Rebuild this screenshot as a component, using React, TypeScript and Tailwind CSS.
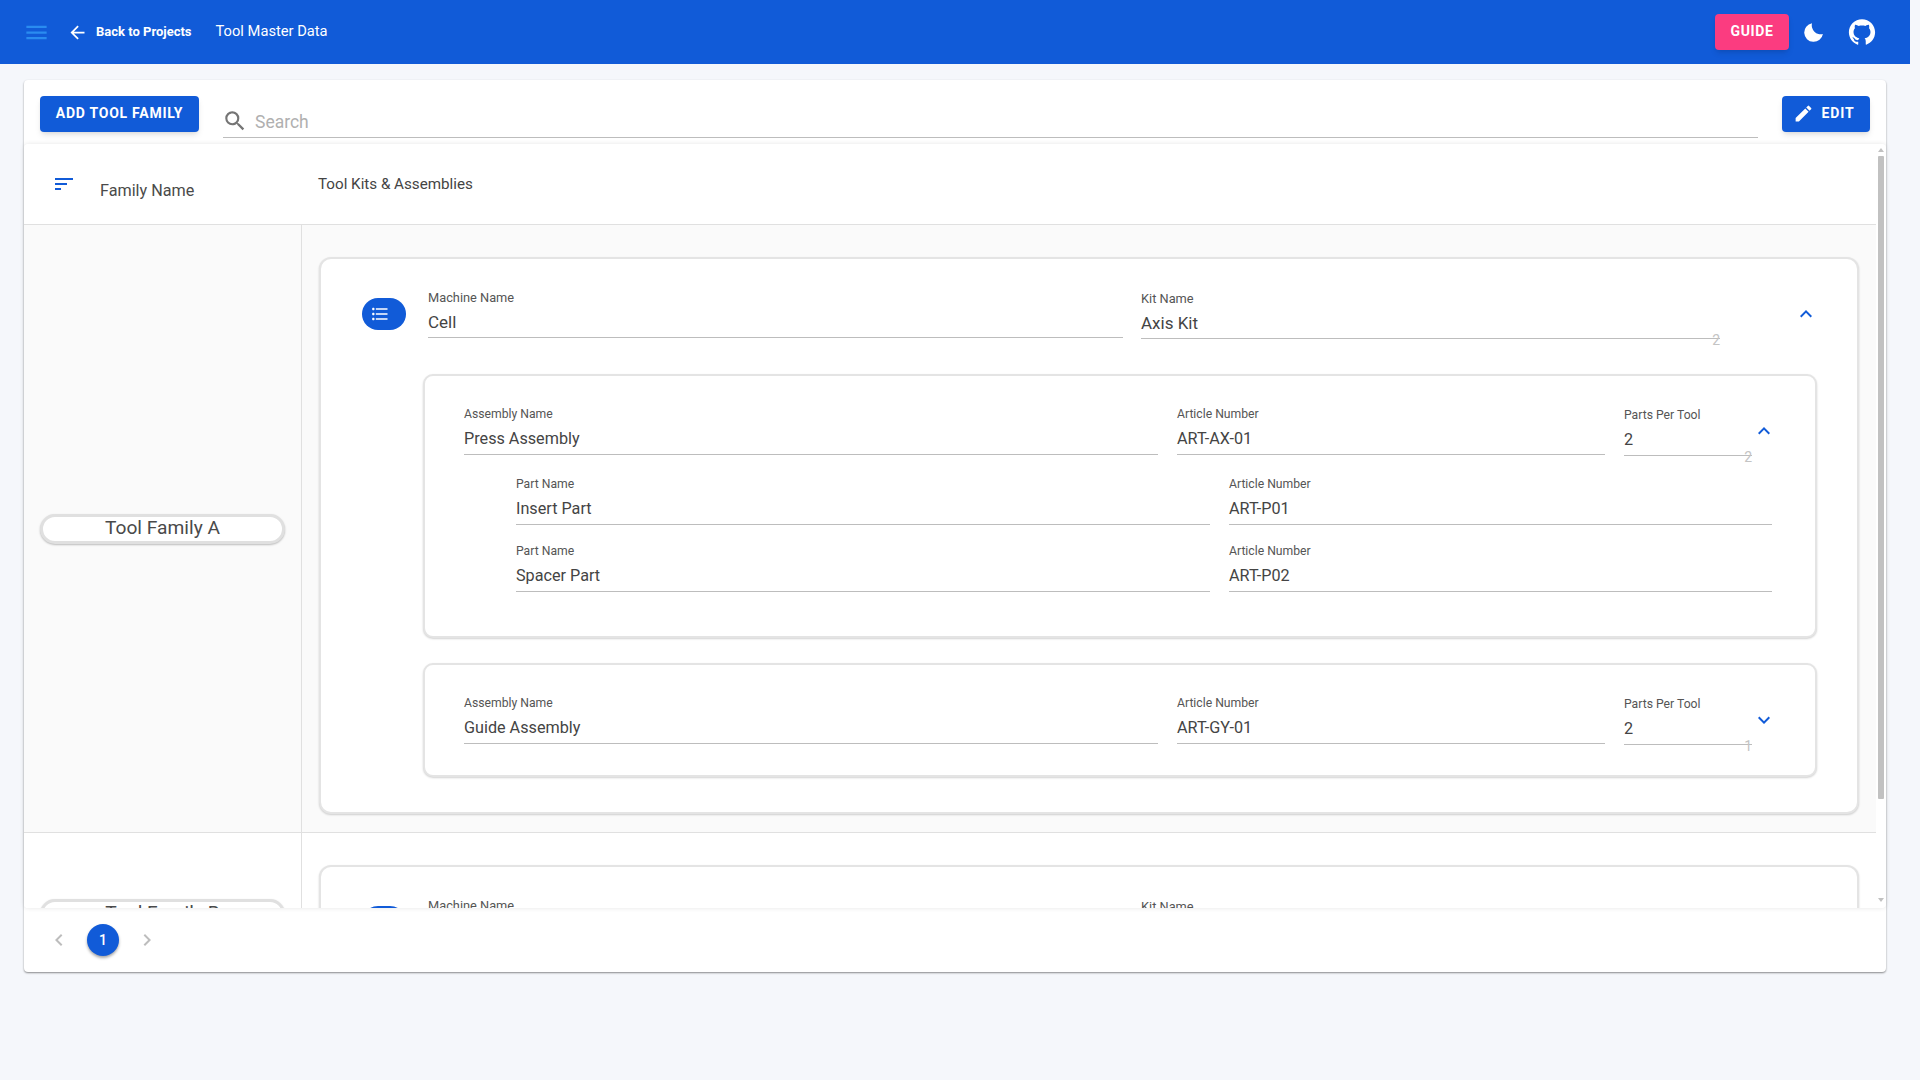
import { ReactNode } from 'react';
import {
  MdMenu,
  MdArrowBack,
  MdSearch,
  MdEdit,
  MdSort,
  MdFormatListBulleted,
  MdExpandLess,
  MdExpandMore,
  MdChevronLeft,
  MdChevronRight,
} from 'react-icons/md';
import { AiOutlineGithub } from 'react-icons/ai';

const PRIMARY = 'bg-[#115bd8]';

// text field with floating label look
const Field: React.FC<{ label: string; value: string; width: string; counter?: string; low?: boolean; big?: boolean }> = ({ label, value, width, counter, low, big }) => (
  <div className={`relative shrink-0 ${width} ${low ? 'mt-px' : ''}`}>
    <div className={`h-[14px] leading-[14px] text-[#555555] ${big ? 'text-[12.8px]' : 'text-[12.2px]'}`}>{label}</div>
    <div className={`border-b border-[#bdbdbd] leading-[30px] text-[#444444] ${big ? 'h-[33px] pt-[2px] text-[17px]' : 'h-[34px] pt-[3px] text-[16.2px]'}`}>{value}</div>
    {counter && <span className={`absolute right-0 text-sm leading-[16px] text-[#c4c4c4] ${big ? 'top-[40px]' : 'top-[41px]'}`}>{counter}</span>}
  </div>
);

const KitHeader: React.FC<{ machine: string; kit: string; counter: string }> = ({ machine, kit, counter }) => (
  <div className="flex items-start pl-[41px]">
    <div className="mt-[7px] flex h-8 w-11 shrink-0 items-center justify-center rounded-full bg-[#115bd8] pr-2 text-white">
      <MdFormatListBulleted size={20} />
    </div>
    <div className="ml-[22px] flex gap-[18px]">
      <Field label="Machine Name" value={machine} width="w-[695px]" big />
      <Field label="Kit Name" value={kit} width="w-[579px]" counter={counter} low big />
    </div>
    <MdExpandLess size={24} className="ml-[74px] mt-[11px] text-[#115bd8]" />
  </div>
);

const Assembly: React.FC<{ name: string; article: string; parts: string; counter: string; open?: boolean; children?: ReactNode }> = ({ name, article, parts, counter, open, children }) => (
  <div className={`ml-[102px] mr-[40px] rounded-[10px] border-2 border-[#e4e4e4] bg-white pl-[39px] pt-[31px] shadow-[0_1px_2px_rgba(0,0,0,0.18)] ${open ? 'h-[264px]' : 'mt-[25px] h-[114px]'}`}>
    <div className="flex items-start gap-[19px]">
      <Field label="Assembly Name" value={name} width="w-[694px]" />
      <Field label="Article Number" value={article} width="w-[428px]" />
      <Field label="Parts Per Tool" value={parts} width="w-[128px]" counter={counter} low />
      {open ? (
        <MdExpandLess size={24} className="-ml-[19px] mt-[12px] text-[#115bd8]" />
      ) : (
        <MdExpandMore size={24} className="-ml-[19px] mt-[12px] text-[#115bd8]" />
      )}
    </div>
    {children}
  </div>
);

const Part: React.FC<{ name: string; article: string; className: string }> = ({ name, article, className }) => (
  <div className={`ml-[52px] flex gap-[19px] ${className}`}>
    <Field label="Part Name" value={name} width="w-[694px]" />
    <Field label="Article Number" value={article} width="w-[543px]" />
  </div>
);

const FamilyRow: React.FC<{ name: string; bg: string; cardPad: string; children: ReactNode }> = ({ name, bg, cardPad, children }) => (
  <div className={`flex border-b border-[#e0e0e0] ${bg}`}>
    <div className="flex w-[278px] shrink-0 items-center border-r border-[#e0e0e0] pl-4 pr-[16px]">
      <div className="h-[30px] w-full rounded-full border-[3px] border-[#e0e0e0] bg-white text-center text-[19.2px] leading-[22px] text-[#4a4a4a] shadow-[0_1px_2px_rgba(0,0,0,0.25)]">
        {name}
      </div>
    </div>
    <div className="min-w-0 flex-1 pl-[17px] pr-[17px] pt-[32px] pb-[18px]">
      <div className={`rounded-[12px] border-2 border-[#e4e4e4] bg-white pt-[32px] shadow-[0_1px_2px_rgba(0,0,0,0.18)] ${cardPad}`}>{children}</div>
    </div>
  </div>
);

function MoonIcon() {
  return (
    <svg width="19" height="19" viewBox="0 0 19 19" fill="currentColor">
      <path d="M8 .2A9.4 9.4 0 1 0 18.9 11 9 9 0 0 1 8 .2Z" />
    </svg>
  );
}

export default function App() {
  return (
    <div className="h-[1080px] w-[1920px] overflow-hidden bg-[#f5f7fb] font-['Roboto',sans-serif]">
      <header className={`flex h-16 w-[1910px] items-center text-white ${PRIMARY}`}>
        <MdMenu size={27} className="ml-[23px] text-[#2a8cf0]" />
        <MdArrowBack size={21} className="ml-[17px]" />
        <span className="ml-[8px] text-[13px] font-bold">Back to Projects</span>
        <span className="ml-[24px] -translate-y-px text-[14.7px]">Tool Master Data</span>
        <button className="ml-auto flex h-9 w-[74px] items-center justify-center rounded bg-[#fb3c80] pb-[2px] text-sm font-bold tracking-[0.6px] text-white shadow-md">
          GUIDE
        </button>
        <span className="ml-[15px] flex w-[19px] justify-center">
          <MoonIcon />
        </span>
        <AiOutlineGithub size={30} className="ml-[24px] mr-[33px]" />
      </header>

      <div className="ml-6 mt-4 flex h-[892px] w-[1862px] flex-col rounded bg-white shadow-[0_1px_2px_rgba(0,0,0,0.45)]">
        <div className="flex h-16 shrink-0 items-start px-4 pt-4">
          <button className={`h-9 w-[159px] rounded pb-[2px] text-sm font-bold tracking-[0.75px] text-white shadow-md ${PRIMARY}`}>ADD TOOL FAMILY</button>
          <div className="ml-[24px] mt-[9px] flex h-[33px] flex-1 items-center border-b border-[#bdbdbd]">
            <MdSearch size={26} className="-ml-px text-[#757575]" />
            <span className="ml-[7px] pt-[3px] text-[17.5px] text-[#b0b0b0]">Search</span>
          </div>
          <button className={`ml-6 flex h-9 w-[88px] items-center justify-center gap-[8px] rounded pb-[2px] pr-[5px] text-sm font-bold tracking-[0.85px] text-white shadow-md ${PRIMARY}`}>
            <MdEdit size={21} />
            EDIT
          </button>
        </div>

        <div className="z-10 flex min-h-0 flex-1 overflow-hidden rounded bg-white shadow-[0_0_5px_rgba(0,0,0,0.1)]">
          <div className="min-w-0 flex-1">
            <div className="flex h-[81px] border-b border-[#e0e0e0]">
              <MdSort size={24} className="ml-[28px] mt-[28px] shrink-0 text-[#115bd8]" />
              <span className="ml-[24px] mt-[35px] w-[218px] shrink-0 text-[16.2px] text-[#4a4a4a]">Family Name</span>
              <span className="mt-[29px] text-[15.2px] text-[#444444]">Tool Kits &amp; Assemblies</span>
            </div>
            <FamilyRow name="Tool Family A" bg="bg-[#fafafa]" cardPad="pb-[35px]">
              <KitHeader machine="Cell" kit="Axis Kit" counter="2" />
              <div className="mt-[35px]">
                <Assembly name="Press Assembly" article="ART-AX-01" parts="2" counter="2" open>
                  <Part name="Insert Part" article="ART-P01" className="mt-[21px]" />
                  <Part name="Spacer Part" article="ART-P02" className="mt-[19px]" />
                </Assembly>
                <Assembly name="Guide Assembly" article="ART-GY-01" parts="2" counter="1" />
              </div>
            </FamilyRow>
            <FamilyRow name="Tool Family B" bg="bg-white" cardPad="pb-[28px]">
              <KitHeader machine="" kit="" counter="1" />
            </FamilyRow>
          </div>
          <div className="flex w-[10px] shrink-0 flex-col items-center pt-[4px]">
            <div className="h-0 w-0 border-x-[3px] border-b-[4px] border-x-transparent border-b-[#c1c1c1]" />
            <div className="mt-[4px] h-[643px] w-[6px] rounded-[1px] bg-[#c1c1c1]" />
            <div className="mt-[99px] h-0 w-0 border-x-[3px] border-t-[4px] border-x-transparent border-t-[#c1c1c1]" />
          </div>
        </div>

        <div className="flex h-16 shrink-0 items-center pl-[23px]">
          <MdChevronLeft size={24} className="text-[#bdbdbd]" />
          <div className={`ml-4 flex h-8 w-8 items-center justify-center rounded-full text-sm font-medium text-white shadow-[0_2px_3px_rgba(0,0,0,0.35)] ${PRIMARY}`}>1</div>
          <MdChevronRight size={24} className="ml-4 text-[#bdbdbd]" />
        </div>
      </div>
    </div>
  );
}
